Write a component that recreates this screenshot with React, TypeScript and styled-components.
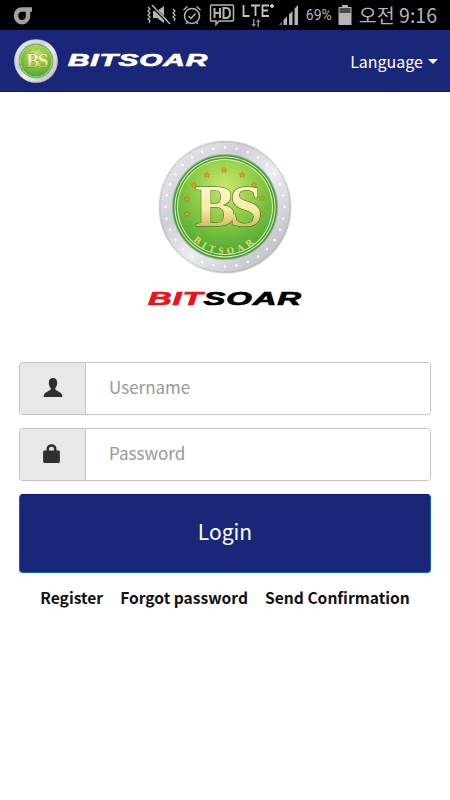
import React from "react";
import styled, { createGlobalStyle } from "styled-components";

const Global = createGlobalStyle`
  html, body { margin: 0; padding: 0; background: #fff; }
  body { font-family: "Noto Sans CJK KR", "Noto Sans", sans-serif; }
  * { box-sizing: border-box; }
`;

const Page = styled.div`
  width: 450px;
  height: 800px;
  display: flex;
  flex-direction: column;
  overflow: hidden;
  background: #fff;
`;

const StatusBar = styled.div`
  height: 30px;
  flex: none;
  background: #000;
  color: #b4b4b4;
  display: flex;
  align-items: center;
  padding: 0 13px;
`;

const StatusLeft = styled.div`
  flex: 1;
  display: flex;
  align-items: center;
`;

const StatusIcon = styled.svg<{ $ml?: number }>`
  display: block;
  flex: none;
  margin-left: ${(p) => p.$ml ?? 0}px;
`;

const Percent = styled.span`
  font-family: "Roboto", sans-serif;
  font-size: 14px;
  line-height: 30px;
  margin-left: 7px;
  width: 28px;
  white-space: nowrap;
`;

const Clock = styled.span`
  font-family: "Noto Sans CJK KR", sans-serif;
  font-size: 19.5px;
  line-height: 30px;
  margin-left: 7px;
  white-space: nowrap;
`;

const Header = styled.header`
  height: 62px;
  flex: none;
  background: #1a2778;
  border-bottom: 1px solid #121c5c;
  display: flex;
  align-items: center;
  padding: 0 12px 0 14px;
`;

const Brand = styled.div`
  flex: 1;
  display: flex;
  align-items: center;
  gap: 10px;
`;

const Wordmark = styled.span<{ $w: number; $size: number; $color: string }>`
  display: block;
  width: ${(p) => p.$w}px;
  font-family: "Liberation Sans", Arial, sans-serif;
  font-weight: 700;
  font-style: italic;
  font-size: ${(p) => p.$size}px;
  line-height: 1;
  letter-spacing: 0.5px;
  color: ${(p) => p.$color};
  -webkit-text-stroke: 0.7px currentColor;
  white-space: nowrap;
`;

const WideText = styled.span<{ $sx: number }>`
  display: inline-block;
  transform: scaleX(${(p) => p.$sx});
  transform-origin: left center;
`;

const RedPart = styled.span`
  color: #e8141f;
`;

const LanguageToggle = styled.button`
  border: 0;
  padding: 0;
  background: none;
  color: #fff;
  font-family: "Noto Sans CJK KR", sans-serif;
  font-size: 16px;
  line-height: 24px;
  display: flex;
  align-items: center;
  gap: 5px;
`;

const Caret = styled.span`
  display: block;
  width: 0;
  height: 0;
  margin-top: 2px;
  border-left: 5.5px solid transparent;
  border-right: 5.5px solid transparent;
  border-top: 5px solid #fff;
`;

const Main = styled.main`
  flex: 1;
  padding: 48px 19px 0;
  display: flex;
  flex-direction: column;
`;

const LogoBlock = styled.div`
  display: flex;
  flex-direction: column;
  align-items: center;
  gap: 16px;
  margin-bottom: 54px;
`;

const Field = styled.div`
  height: 53px;
  display: flex;
  border: 1px solid #c6c6c6;
  border-radius: 4px;
  margin-bottom: 13px;
  overflow: hidden;
  box-shadow: 0 0 1px #c6c6c6;
`;

const Addon = styled.div<{ $pr?: number }>`
  width: 66px;
  flex: none;
  background: #e8e8e8;
  border-right: 1px solid #c8c8c8;
  display: flex;
  align-items: center;
  justify-content: center;
  padding: 0 ${(p) => p.$pr ?? 0}px 3px 0;
`;

const Input = styled.input`
  flex: 1;
  min-width: 0;
  border: 0;
  outline: 0;
  background: #fff;
  padding: 0 23px 4px;
  font-family: "Noto Sans CJK KR", sans-serif;
  font-size: 17px;
  color: #333;
  &::placeholder {
    color: #999;
    opacity: 1;
  }
`;

const LoginButton = styled.button`
  height: 79px;
  flex: none;
  border: 1px solid #0f62c8;
  border-top-color: #0a1a6a;
  border-radius: 4px;
  background: #1a2778;
  color: #fff;
  padding: 0 0 6px;
  font-family: "Noto Sans CJK KR", sans-serif;
  font-size: 21px;
  line-height: 30px;
`;

const LinkRow = styled.nav`
  display: flex;
  justify-content: center;
  gap: 17px;
  margin-top: 12px;
`;

const TextLink = styled.a`
  color: #111;
  font-family: "Noto Sans CJK KR", sans-serif;
  font-weight: 700;
  font-size: 15.6px;
  line-height: 24px;
  text-decoration: none;
  white-space: nowrap;
`;

const CoinSvg = styled.svg`
  display: block;
  flex: none;
`;

const stars = [
  [-31, -22], [-18, -32], [-1, -37], [17, -32], [29, -22],
  [37, -9], [37, 7], [-38, -8], [-38, 7],
];

const ringDots = Array.from({ length: 32 }, (_, i) => {
  const a = (i / 32) * Math.PI * 2;
  return [Math.cos(a) * 59.5, Math.sin(a) * 59.5];
});

const starPath =
  "M0 -3L0.9 -0.9L3 -0.9L1.3 0.4L1.900 2.600L0 1.300L-1.900 2.600L-1.300 0.400L-3 -0.900L-0.900 -0.900Z";

const Coin: React.FC<{ size: number; detail?: boolean }> = ({ size, detail }) => (
  <CoinSvg width={size} height={size} viewBox="-67 -67 134 134">
    <defs>
      <linearGradient id={`rim${size}`} x1="0" y1="0" x2="1" y2="1">
        <stop offset="0" stopColor="#f1f1f3" />
        <stop offset="0.35" stopColor="#cfd0d5" />
        <stop offset="0.55" stopColor="#ecedf0" />
        <stop offset="1" stopColor="#aeafb6" />
      </linearGradient>
      <radialGradient id={`face${size}`} cx="0.5" cy="0.28" r="0.8">
        <stop offset="0" stopColor="#cbe66a" />
        <stop offset="0.5" stopColor="#84c83f" />
        <stop offset="1" stopColor="#3f9f38" />
      </radialGradient>
      <linearGradient id={`gold${size}`} x1="0" y1="0" x2="0" y2="1">
        <stop offset="0" stopColor="#fffde0" />
        <stop offset="0.55" stopColor="#f8eba6" />
        <stop offset="1" stopColor="#b89a36" />
      </linearGradient>
      <path id={`arc${size}`} d="M -43 4 A 42 42 0 0 0 43 4" fill="none" />
    </defs>
    <circle r="66.5" fill={`url(#rim${size})`} />
    <circle r="65" fill="none" stroke="#a8a9b0" strokeWidth="1" strokeDasharray="1 1" />
    <circle r="53" fill="#a6a8ae" />
    {ringDots.map(([x, y], i) => (
      <circle key={i} cx={x} cy={y} r="1.2" fill="#fff" />
    ))}
    <circle r="52" fill="#3f9f36" />
    <circle r="50.5" fill="#eaf3b0" />
    <circle r="49.5" fill="#3f9f36" />
    <circle r="48" fill="#eaf3b0" />
    <circle r="47" fill={`url(#face${size})`} />
    {stars.map(([x, y], i) => (
      <path key={i} transform={`translate(${x} ${y})`} d={starPath} fill="#e8a422" stroke="#a8401a" strokeWidth="0.3" />
    ))}
    <text
      x="1"
      y="19"
      textAnchor="middle"
      fontFamily="'Liberation Serif', serif"
      fontSize="60"
      fontWeight="700"
      letterSpacing="-6"
      fill={`url(#gold${size})`}
      stroke="#2f5a1a"
      strokeWidth="1"
      paintOrder="stroke"
    >
      BS
    </text>
    {detail && (
      <text fontFamily="'Liberation Serif', serif" fontSize="9.5" fontWeight="700" letterSpacing="4" fill="#e8d873">
        <textPath href={`#arc${size}`} startOffset="50%" textAnchor="middle">
          BITSOAR
        </textPath>
      </text>
    )}
  </CoinSvg>
);

const UserIcon = () => (
  <svg width="20" height="19" viewBox="0 0 20 19" style={{ display: "block" }}>
    <path
      fill="#2f2f2f"
      d="M10 0c2.700 0 4.200 2 4.200 4.700 0 2.100-.8 4-1.900 5.200v1.500c1.200 1 5.800 3 6.600 5 .2.600.4 1.500.5 2.600H.6c.1-1.100.3-2 .5-2.600.8-2 5.400-4 6.600-5V9.900C6.600 8.700 5.800 6.800 5.800 4.700 5.800 2 7.300 0 10 0z"
    />
  </svg>
);

const LockIcon = () => (
  <svg width="17" height="19" viewBox="0 0 17 19" style={{ display: "block" }}>
    <path
      fill="#2f2f2f"
      fillRule="evenodd"
      d="M3.500 6.500V5C3.500 2 5.500.2 8.500.2s5 1.800 5 4.800v1.500h2c.9 0 1.400.5 1.400 1.400v9.700c0 .9-.5 1.400-1.400 1.400h-14c-.9 0-1.400-.5-1.400-1.400V7.900c0-.9.5-1.400 1.400-1.400h2zm2.600 0h4.800V5c0-1.500-.9-2.300-2.400-2.300S6.100 3.500 6.100 5v1.500z"
    />
  </svg>
);

export default function App() {
  return (
    <Page>
      <Global />
      <StatusBar>
        <StatusLeft>
          <StatusIcon width="20" height="20" viewBox="0 0 20 20">
            <path
              fill="none"
              stroke="#a0a0a0"
              strokeWidth="4.500"
              d="M19 4.500H9C5 4.500 3 7 3 10.500c0 4 2.500 6.700 6 6.700s6-2.700 6-6.700V6"
            />
          </StatusIcon>
        </StatusLeft>
        <StatusIcon width="30" height="22" viewBox="0 0 30 22">
          <path fill="none" stroke="#b4b4b4" strokeWidth="1.300" d="M2 3l2 2-2 2 2 2-2 2 2 2-2 2 2 2-1 2M27 5l2 2-2 2 2 2-2 2 2 2-1 2" />
          <path fill="#b4b4b4" d="M7 7h4l7-5v17l-7-5H7z" />
          <path stroke="#000" strokeWidth="3" d="M6 2l18 18" />
          <path stroke="#b4b4b4" strokeWidth="1.500" d="M6 1l18 19" />
        </StatusIcon>
        <StatusIcon $ml={6} width="20" height="22" viewBox="0 0 20 22">
          <circle cx="10" cy="12" r="7.500" fill="none" stroke="#b4b4b4" strokeWidth="1.500" />
          <path fill="none" stroke="#b4b4b4" strokeWidth="1.500" d="M6.500 12l2.500 2.500 4.500-5M1.500 6l4-3.500M18.500 6l-4-3.500M4 20l2-2M16 20l-2-2" />
        </StatusIcon>
        <StatusIcon $ml={7} width="26" height="24" viewBox="0 0 26 24">
          <path fill="none" stroke="#b4b4b4" strokeWidth="1.500" d="M2.500 2h21c.5 0 1 .5 1 1v14c0 .5-.5 1-1 1H10l-3 3.500V18H2.500c-.5 0-1-.5-1-1V3c0-.5.5-1 1-1z" />
          <path fill="none" stroke="#b4b4b4" strokeWidth="2" d="M5.500 5v10M11 5v10M5.500 10H11M14.500 5v10h2.500c2.500 0 4-2 4-5s-1.500-5-4-5z" />
        </StatusIcon>
        <StatusIcon $ml={7} width="32" height="26" viewBox="0 0 32 26">
          <path fill="none" stroke="#c4c4c4" strokeWidth="1.800" d="M1.500 3v11h6M9 3.500h9M13.500 3.500V14M27 3.500h-6.500V14H27M20.500 8.500H26M28 4h4M30 2v4" />
          <path fill="#8a8a8a" d="M11 17h1.500v5H14l-2.200 3-2.300-3H11zM17 25h-1.500v-5H14l2.200-3 2.300 3H17z" />
        </StatusIcon>
        <StatusIcon $ml={4} width="21" height="22" viewBox="0 0 21 22">
          <path fill="#b4b4b4" d="M20 1v20h-3.500V4.500zM14.500 7v14H11V10.500zM9 12.500V21H5.500v-5z" />
          <path fill="#666" d="M4 17.500V21H.8z" />
        </StatusIcon>
        <Percent>69%</Percent>
        <StatusIcon $ml={4} width="14" height="22" viewBox="0 0 14 22">
          <path fill="#b4b4b4" d="M4 1h6v2h3.500v18H.5V3H4z" />
          <path fill="#4a4a4a" d="M1.500 4h11v5h-11z" />
        </StatusIcon>
        <Clock>오전 9:16</Clock>
      </StatusBar>
      <Header>
        <Brand>
          <Coin size={44} />
          <Wordmark $w={140} $size={17} $color="#fff">
            <WideText $sx={1.75}>BITSOAR</WideText>
          </Wordmark>
        </Brand>
        <LanguageToggle type="button">
          Language
          <Caret />
        </LanguageToggle>
      </Header>
      <Main>
        <LogoBlock>
          <Coin size={134} detail />
          <Wordmark $w={154} $size={18} $color="#000">
            <WideText $sx={1.82}>
              <RedPart>BIT</RedPart>SOAR
            </WideText>
          </Wordmark>
        </LogoBlock>
        <Field>
          <Addon>
            <UserIcon />
          </Addon>
          <Input placeholder="Username" />
        </Field>
        <Field>
          <Addon $pr={2}>
            <LockIcon />
          </Addon>
          <Input placeholder="Password" type="password" />
        </Field>
        <LoginButton type="button">Login</LoginButton>
        <LinkRow>
          <TextLink href="#">Register</TextLink>
          <TextLink href="#">Forgot password</TextLink>
          <TextLink href="#">Send Confirmation</TextLink>
        </LinkRow>
      </Main>
    </Page>
  );
}
